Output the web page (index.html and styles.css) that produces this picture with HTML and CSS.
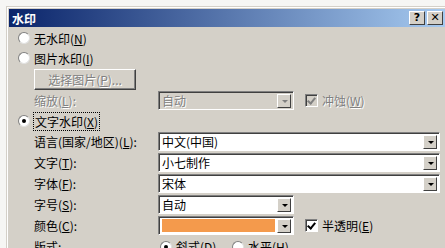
FILE: index.html
```html
<!DOCTYPE html>
<html lang="zh-CN">
<head>
    <meta charset="UTF-8">
    <title>水印</title>
    <link rel="stylesheet" href="styles.css">
</head>
<body>
    <div class="dialog">
        <div class="titlebar">
            <span class="title">水印</span>
            <div class="title-buttons">
                <span class="tbtn">?</span>
                <span class="tbtn">&#x2715;</span>
            </div>
        </div>

        <div class="content">
            <!-- watermark type -->
            <div class="row opt">
                <span class="radio"></span>
                <span>无水印(<u>N</u>)</span>
            </div>
            <div class="row opt">
                <span class="radio"></span>
                <span>图片水印(<u>I</u>)</span>
            </div>
            <div class="row btn-row">
                <span class="button disabled">选择图片(<u>P</u>)...</span>
            </div>
            <div class="row field">
                <span class="label disabled">缩放(<u>L</u>):</span>
                <div class="combo short disabled">
                    <span class="value">自动</span>
                    <span class="arrow"></span>
                </div>
                <span class="check checked disabled-check"></span>
                <span class="disabled">冲蚀(<u>W</u>)</span>
            </div>
            <div class="row opt">
                <span class="radio selected"></span>
                <span class="focus">文字水印(<u>X</u>)</span>
            </div>

            <!-- text watermark -->
            <div class="row field">
                <span class="label">语言(国家/地区)(<u>L</u>):</span>
                <div class="combo long">
                    <span class="value">中文(中国)</span>
                    <span class="arrow"></span>
                </div>
            </div>
            <div class="row field">
                <span class="label">文字(<u>T</u>):</span>
                <div class="combo long">
                    <span class="value">小七制作</span>
                    <span class="arrow"></span>
                </div>
            </div>
            <div class="row field">
                <span class="label">字体(<u>F</u>):</span>
                <div class="combo long">
                    <span class="value">宋体</span>
                    <span class="arrow"></span>
                </div>
            </div>
            <div class="row field">
                <span class="label">字号(<u>S</u>):</span>
                <div class="combo short">
                    <span class="value">自动</span>
                    <span class="arrow"></span>
                </div>
            </div>
            <div class="row field">
                <span class="label">颜色(<u>C</u>):</span>
                <div class="combo short">
                    <span class="value swatch"></span>
                    <span class="arrow"></span>
                </div>
                <span class="check checked"></span>
                <span>半透明(<u>E</u>)</span>
            </div>
            <div class="row field">
                <span class="label">版式:</span>
                <span class="radio selected"></span>
                <span class="layout-opt">斜式(<u>D</u>)</span>
                <span class="radio"></span>
                <span>水平(<u>H</u>)</span>
            </div>
        </div>
    </div>
</body>
</html>
```

FILE: styles.css
```css
body {
    margin: 0;
    padding: 0;
    background: #f6f6f4;
    font-family: "Noto Sans CJK SC", "DejaVu Sans", sans-serif;
    font-size: 12px;
    color: #000;
    overflow: hidden;
}
.dialog {
    margin: 6px 0 0 6px;
    height: 260px;
    background: #d4d0c8;
    border-top: 1px solid #d4d0c8;
    border-left: 1px solid #d4d0c8;
    box-shadow: inset 1px 1px 0 #ffffff;
    padding: 2px 0 0 2px;
}
.titlebar {
    height: 18px;
    display: flex;
    align-items: center;
    justify-content: space-between;
    background: linear-gradient(to right, #0a246a, #a6caf0);
    padding: 0 2px 0 3px;
}
.title {
    color: #fff;
    font-weight: bold;
    font-size: 12px;
}
.title-buttons {
    display: flex;
    gap: 2px;
}
.tbtn {
    width: 14px;
    height: 12px;
    background: #d4d0c8;
    border: 1px solid;
    border-color: #fff #404040 #404040 #fff;
    font: bold 11px "DejaVu Sans", sans-serif;
    line-height: 12px;
    text-align: center;
}
.content {
    padding: 1px 0 0 0;
}
.row {
    display: flex;
    align-items: center;
    height: 20px;
}
.opt {
    padding-left: 9px;
}
.radio {
    width: 10px;
    height: 10px;
    border-radius: 50%;
    background: #fff;
    border: 1px solid #808080;
    border-right-color: #e0e0e0;
    border-bottom-color: #e0e0e0;
    margin-right: 4px;
    position: relative;
    flex: none;
}
.radio.selected::after {
    content: "";
    position: absolute;
    left: 3px;
    top: 3px;
    width: 4px;
    height: 4px;
    border-radius: 50%;
    background: #000;
}
.focus {
    outline: 1px dotted #000;
    outline-offset: 0;
    padding: 0 1px;
}
.btn-row {
    height: 22px;
    padding-left: 25px;
}
.button {
    width: 100px;
    height: 19px;
    display: flex;
    align-items: center;
    justify-content: center;
    background: #d4d0c8;
    border: 1px solid;
    border-color: #fff #404040 #404040 #fff;
    box-shadow: inset -1px -1px 0 #808080;
}
.disabled {
    color: #808080;
    text-shadow: 1px 1px 0 #fff;
}
.field {
    height: 21px;
    padding-left: 25px;
}
.label {
    width: 124px;
    flex: none;
}
.combo {
    height: 17px;
    display: flex;
    align-items: center;
    background: #fff;
    border: 1px solid;
    border-color: #808080 #fff #fff #808080;
    box-shadow: inset 1px 1px 0 #404040;
    padding: 0 2px 0 3px;
    flex: none;
}
.combo.short {
    width: 129px;
}
.combo.long {
    width: 275px;
}
.combo.disabled {
    background: #d4d0c8;
}
.value {
    flex: 1;
    line-height: 15px;
}
.swatch {
    height: 13px;
    background: #f49a4c;
    margin-right: 2px;
}
.arrow {
    width: 12px;
    height: 12px;
    background: #d4d0c8;
    border: 1px solid;
    border-color: #fff #404040 #404040 #fff;
    position: relative;
    flex: none;
}
.arrow::after {
    content: "";
    position: absolute;
    left: 4px;
    top: 5px;
    border-left: 3px solid transparent;
    border-right: 3px solid transparent;
    border-top: 3px solid #000;
}
.combo.disabled .arrow::after {
    border-top-color: #808080;
}
.check {
    width: 11px;
    height: 11px;
    background: #fff;
    border: 1px solid;
    border-color: #808080 #fff #fff #808080;
    box-shadow: inset 1px 1px 0 #404040;
    margin: 0 4px 0 11px;
    position: relative;
    flex: none;
}
.check.checked::after {
    content: "";
    position: absolute;
    left: 3px;
    top: 1px;
    width: 3px;
    height: 6px;
    border: solid #000;
    border-width: 0 2px 2px 0;
    transform: rotate(40deg);
}
.disabled-check {
    background: #d4d0c8;
}
.disabled-check.checked::after {
    border-color: #808080;
}
.field .radio {
    margin-left: 2px;
}
.layout-opt {
    width: 54px;
}
```
